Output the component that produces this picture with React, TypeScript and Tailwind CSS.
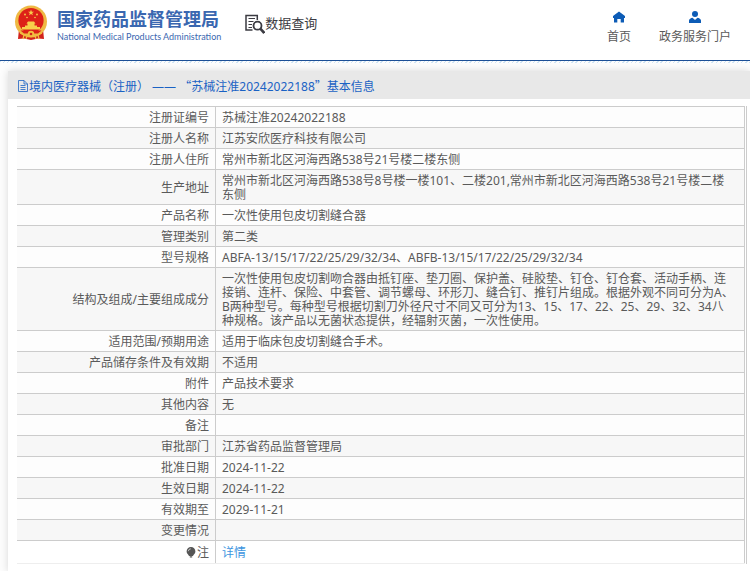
import React from "react";

type Row = { label: string; value: string };

const rows: Row[] = [
  { label: "注册证编号", value: "苏械注准20242022188" },
  { label: "注册人名称", value: "江苏安欣医疗科技有限公司" },
  { label: "注册人住所", value: "常州市新北区河海西路538号21号楼二楼东侧" },
  {
    label: "生产地址",
    value: "常州市新北区河海西路538号8号楼一楼101、二楼201,常州市新北区河海西路538号21号楼二楼东侧",
  },
  { label: "产品名称", value: "一次性使用包皮切割缝合器" },
  { label: "管理类别", value: "第二类" },
  { label: "型号规格", value: "ABFA-13/15/17/22/25/29/32/34、ABFB-13/15/17/22/25/29/32/34" },
  {
    label: "结构及组成/主要组成成分",
    value:
      "一次性使用包皮切割吻合器由抵钉座、垫刀圈、保护盖、硅胶垫、钉仓、钉仓套、活动手柄、连接销、连杆、保险、中套管、调节螺母、环形刀、缝合钉、推钉片组成。根据外观不同可分为A、B两种型号。每种型号根据切割刀外径尺寸不同又可分为13、15、17、22、25、29、32、34八种规格。该产品以无菌状态提供，经辐射灭菌，一次性使用。",
  },
  { label: "适用范围/预期用途", value: "适用于临床包皮切割缝合手术。" },
  { label: "产品储存条件及有效期", value: "不适用" },
  { label: "附件", value: "产品技术要求" },
  { label: "其他内容", value: "无" },
  { label: "备注", value: "" },
  { label: "审批部门", value: "江苏省药品监督管理局" },
  { label: "批准日期", value: "2024-11-22" },
  { label: "生效日期", value: "2024-11-22" },
  { label: "有效期至", value: "2029-11-21" },
  { label: "变更情况", value: "" },
];

function Emblem() {
  return (
    <svg width="34" height="36" viewBox="0 0 34 36" aria-hidden="true">
      <path d="M5 24 L4 34 L10 33.500 L17 35 L24 33.500 L30 34 L29 24Z" fill="#d2231c" />
      <circle cx="17" cy="16.500" r="16" fill="#efb944" />
      <circle cx="17" cy="15.500" r="12.600" fill="#dd2018" />
      <path d="M17 4.500l.8 2.200h2.200l-1.800 1.400.7 2.200-1.900-1.400-1.900 1.400.7-2.200-1.800-1.400h2.200z" fill="#f7cf4a" />
      <g fill="#f7cf4a">
        <circle cx="11" cy="9.500" r=".9" />
        <circle cx="23" cy="9.500" r=".9" />
        <circle cx="13" cy="12.500" r=".8" />
        <circle cx="21" cy="12.500" r=".8" />
        <path d="M12.500 18.500l1.500-2h6l1.500 2zM13.500 18.500h7v2h-7zM11 20.500h12v1.500h3v2.500H8V22h3z" />
      </g>
      <path d="M6.500 25.500h21l-3.500 3H10z" fill="#dd2018" />
      <circle cx="17" cy="29" r="3.200" fill="#f3be3e" />
      <circle cx="17" cy="29" r="1.300" fill="#d2231c" />
      <path d="M6 28l4 2-1 4M28 28l-4 2 1 4M13 31l-1 3M21 31l1 3" fill="none" stroke="#f3be3e" strokeWidth="1.200" />
    </svg>
  );
}

function QueryIcon() {
  return (
    <svg width="20" height="21" viewBox="0 0 20 21" fill="none" stroke="#3b3b42" aria-hidden="true">
      <path d="M12.300 6V1.500H1v14.500h6.500" strokeWidth="1.500" />
      <path d="M3.500 4.500h6.500M3.500 7.500h5M3.500 10.500h3.500M3.500 13.500h3.500" strokeWidth="1.200" />
      <circle cx="12.500" cy="11.700" r="4" strokeWidth="1.800" />
      <path d="M15.300 14.700l4 4.300" strokeWidth="2.600" />
    </svg>
  );
}

function HomeIcon() {
  return (
    <svg width="12" height="12" viewBox="0 0 12 12" fill="#0d5cb6" aria-hidden="true">
      <path d="M6 .500L0 5v2h1v4.500h3.300V8h3.400v3.500H11V7h1V5z" />
    </svg>
  );
}

function PersonIcon() {
  return (
    <svg width="12" height="12" viewBox="0 0 12 12" fill="#0d5cb6" aria-hidden="true">
      <circle cx="6" cy="3" r="3" />
      <path d="M0 12V9.500C0 8 2 7 3.500 6.700L6 9l2.500-2.300C10 7 12 8 12 9.500V12z" />
    </svg>
  );
}

function FileIcon() {
  return (
    <svg width="10" height="12" viewBox="0 0 10 12" fill="none" stroke="#1a62c4" strokeWidth=".8" aria-hidden="true">
      <path d="M.5.500h5.500l3.500 3.500v7.500h-9zM6 .500v3.500h3.500M2.500 5.500h5M2.500 7.500h5M2.500 9.500h5" />
    </svg>
  );
}

function BulbIcon() {
  return (
    <svg width="10" height="12" viewBox="0 0 10 12" fill="#555" aria-hidden="true">
      <path d="M5 0a4.400 4.400 0 0 0-4.400 4.400C.6 6.500 2.600 7.500 3 9h4c.4-1.500 2.400-2.500 2.400-4.600A4.400 4.400 0 0 0 5 0zM3.800 9.300h2.400v1.200H3.800z" />
      <path d="M2.300 4.200A2.600 2.600 0 0 1 4.800 1.800" fill="none" stroke="#ddd" strokeWidth=".8" />
    </svg>
  );
}

const labelCell =
  "w-[199px] border-t border-r border-[#ccc] pt-[4px] pb-[2px] pr-[6px] text-right font-normal align-middle";
const valueCell = "border-t border-r border-[#ccc] pt-[4px] pr-[9px] pb-[2px] pl-[6px] align-middle";

export default function App() {
  return (
    <div className="min-h-screen overflow-hidden bg-[#fdfdfd] font-['Noto_Sans','Noto_Sans_CJK_SC',sans-serif] text-xs text-[#5a5a5a]">
      <header className="flex h-[61px] items-start justify-between border-b border-[#1c4f96] bg-white pr-[19px] pl-[14px]">
        <div className="flex items-start">
          <a href="#home" className="flex items-start gap-[9px] pt-[5px] text-[#3a67b0]">
            <Emblem />
            <span className="flex flex-col pt-px whitespace-nowrap">
              <span className="text-lg leading-[26px] font-bold">国家药品监督管理局</span>
              <span className="font-[Lato,sans-serif] text-[9px] leading-[10px]">
                National Medical Products Administration
              </span>
            </span>
          </a>
          <a href="#query" className="ml-[24px] flex pt-[14px] text-[#3b3b42]">
            <QueryIcon />
            <span className="text-[13px] leading-[18px] whitespace-nowrap">数据查询</span>
          </a>
        </div>
        <nav className="flex gap-[28px] pt-[11px] leading-[18px] whitespace-nowrap">
          <a href="#index" className="flex flex-col items-center gap-[5px]">
            <HomeIcon />
            首页
          </a>
          <a href="#portal" className="flex flex-col items-center gap-[5px]">
            <PersonIcon />
            政务服务门户
          </a>
        </nav>
      </header>
      <div className="h-[2px] bg-[repeating-linear-gradient(135deg,#cfe4f4_0px,#cfe4f4_1px,#fdfdfd_1px,#fdfdfd_3px)]" />

      <main className="mt-[8px] ml-[8px] bg-white pb-[8px] shadow-[0_0_8px_rgba(0,0,0,0.15)]">
        <h1 className="flex h-[28px] items-center bg-[#e8e8e8] pt-[2px] pl-[10px] font-normal whitespace-nowrap text-[#1a62c4]">
          <FileIcon />
          <span className="ml-px">
            境内医疗器械（注册） —— <span className="font-['Noto_Sans_CJK_SC',sans-serif]">“</span>
            苏械注准20242022188
            <span className="font-['Noto_Sans_CJK_SC',sans-serif]">”</span>基本信息
          </span>
        </h1>
        <div className="mt-[7px] mr-[3px] ml-[9px] border-r border-[#ccc] pr-px">
          <table className="w-full table-fixed border-separate border-spacing-0 border-b border-[#eee] leading-[14px]">
            <tbody>
              {rows.map((row) => (
                <tr key={row.label} className="odd:bg-[#fdfdfd] even:bg-[#f7f7f7]">
                  <th scope="row" className={labelCell}>
                    {row.label}
                  </th>
                  <td className={valueCell}>{row.value || "\u00a0"}</td>
                </tr>
              ))}
              <tr>
                <th scope="row" className={labelCell}>
                  <span className="flex items-center justify-end gap-px leading-4">
                    <BulbIcon />注
                  </span>
                </th>
                <td className={valueCell}>
                  <a href="#detail" className="block leading-4 text-[#3d95e0]">
                    详情
                  </a>
                </td>
              </tr>
            </tbody>
          </table>
        </div>
      </main>
    </div>
  );
}
